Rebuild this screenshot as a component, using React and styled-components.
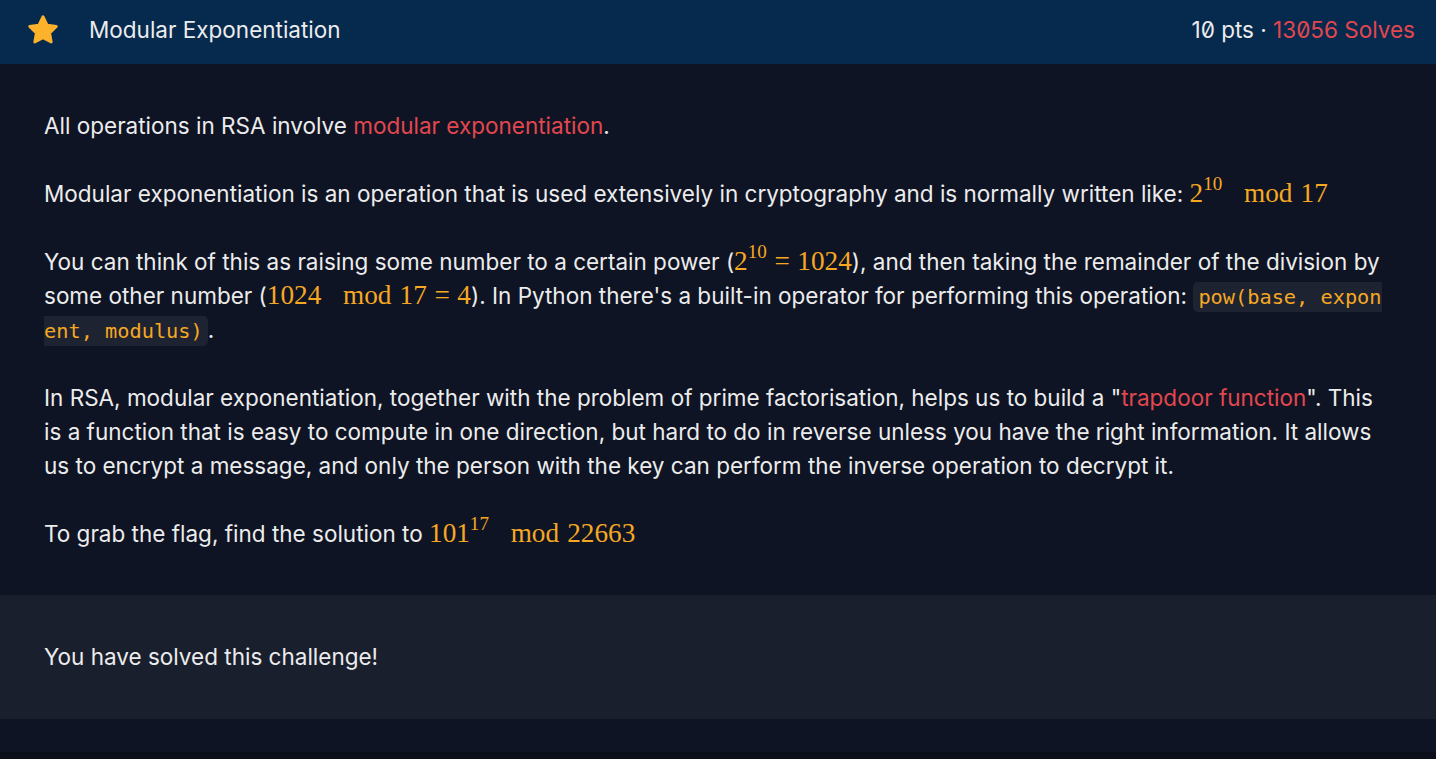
import React from "react";
import styled, { createGlobalStyle } from "styled-components";

const GlobalStyle = createGlobalStyle`
  html, body {
    margin: 0;
    padding: 0;
    background: #0b0f19;
  }
  body {
    font-family: Inter, "Noto Sans", sans-serif;
    color: #ececec;
  }
`;

const Page = styled.div`
  min-height: 100vh;
  background: #0b0f19;
`;

const Card = styled.div`
  background: #0f1424;
  padding-bottom: 33px;
`;

const Header = styled.header`
  display: flex;
  align-items: center;
  height: 64px;
  box-sizing: border-box;
  padding: 0 21px 5px 26px;
  background: #06294e;
`;

const StarIcon = styled.svg`
  width: 34px;
  height: 34px;
  flex-shrink: 0;
`;

const Title = styled.h1`
  margin: 0 0 0 29px;
  flex: 1;
  font-size: 22.5px;
  font-weight: 400;
  color: #ececec;
`;

const Stats = styled.div`
  font-size: 22.5px;
  color: #ececec;
  font-feature-settings: "zero" 1;
`;

const Red = styled.span`
  color: #e2474f;
`;

const Body = styled.section`
  padding: 45px 44px 44px;
  font-size: 22.5px;
  line-height: 34px;
`;

const Para = styled.p`
  margin: 0 0 34px;
  &:last-child {
    margin-bottom: 0;
  }
`;

const Link = styled.a`
  color: #e2474f;
  text-decoration: none;
`;

const Math = styled.span`
  font-family: "Liberation Serif", "DejaVu Serif", serif;
  font-size: 1.21em;
  line-height: 0;
  color: #f6a823;
  white-space: nowrap;
`;

const Sup = styled.sup`
  font-size: 0.7em;
  line-height: 0;
  vertical-align: 0.62em;
`;

const Rel = styled.span`
  padding: 0 0.28em;
`;

const Mod = styled.span`
  margin-left: 0.8em;
  margin-right: 0.3em;
`;

const Code = styled.code`
  font-family: "DejaVu Sans Mono", "Liberation Mono", monospace;
  font-size: 20.3px;
  line-height: 0;
  color: #f6a823;
  background: #1e2332;
  border-radius: 5px;
  padding: 3px 5px;
  word-break: break-all;
`;

const Solved = styled.section`
  background: #1a1f2e;
  padding: 45px 44px;
  font-size: 22.5px;
  line-height: 34px;
`;

function Star() {
  return (
    <StarIcon viewBox="0 0 24 24">
      <path
        d="M12 2.6l2.9 5.9 6.5.95-4.7 4.58 1.1 6.47L12 17.45 6.2 20.5l1.1-6.47L2.6 9.45l6.5-.95z"
        fill="#fdb22b"
        stroke="#fdb22b"
        strokeWidth="2"
        strokeLinejoin="round"
      />
    </StarIcon>
  );
}

export default function App() {
  return (
    <Page>
      <GlobalStyle />
      <Card>
        <Header>
          <Star />
          <Title>Modular Exponentiation</Title>
          <Stats>
            10 pts · <Red>13056 Solves</Red>
          </Stats>
        </Header>
        <Body>
          <Para>
            All operations in RSA involve <Link href="#">modular exponentiation</Link>.
          </Para>
          <Para>
            Modular exponentiation is an operation that is used extensively in cryptography and is
            normally written like:{" "}
            <Math>
              2<Sup>10</Sup>
              <Mod>mod</Mod>17
            </Math>
          </Para>
          <Para>
            You can think of this as raising some number to a certain power (
            <Math>
              2<Sup>10</Sup>
              <Rel>=</Rel>1024
            </Math>
            ), and then taking the remainder of the division by some other number (
            <Math>
              1024<Mod>mod</Mod>17<Rel>=</Rel>4
            </Math>
            ). In Python there's a built-in operator for performing this operation:{" "}
            <Code>pow(base, exponent, modulus)</Code>.
          </Para>
          <Para>
            In RSA, modular exponentiation, together with the problem of prime factorisation, helps
            us to build a "<Link href="#">trapdoor function</Link>". This is a function that is easy
            to compute in one direction, but hard to do in reverse unless you have the right
            information. It allows us to encrypt a message, and only the person with the key can
            perform the inverse operation to decrypt it.
          </Para>
          <Para>
            To grab the flag, find the solution to{" "}
            <Math>
              101<Sup>17</Sup>
              <Mod>mod</Mod>22663
            </Math>
          </Para>
        </Body>
        <Solved>You have solved this challenge!</Solved>
      </Card>
    </Page>
  );
}
